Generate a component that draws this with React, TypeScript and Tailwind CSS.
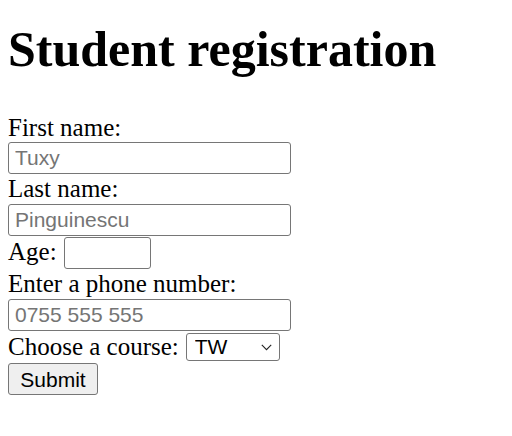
import React from 'react';

const fieldClass =
  "h-[32px] rounded-[3px] border border-[#767676] bg-white px-[6px] font-['Liberation_Sans',Arial,sans-serif] text-[21px] text-black placeholder:text-[#757575] outline-none";

export default function App() {
  return (
    <div className="min-h-[436px] w-[512px] bg-white px-[8px] font-['Liberation_Serif','Times_New_Roman',serif] text-[25px] text-black">
      <h1 className="pt-[21px] text-[50px] font-bold leading-[57px]">Student registration</h1>

      <form className="mt-[35.5px] flex flex-col items-start" onSubmit={(e) => e.preventDefault()}>
        <label htmlFor="first" className="leading-[28.7px]">First name:</label>
        <div className="flex h-[33px]">
          <input id="first" type="text" placeholder="Tuxy" className={`${fieldClass} w-[283px]`} />
        </div>

        <label htmlFor="last" className="leading-[28.7px]">Last name:</label>
        <div className="flex h-[33px]">
          <input id="last" type="text" placeholder="Pinguinescu" className={`${fieldClass} w-[283px]`} />
        </div>

        <div className="flex h-[33px] items-baseline gap-[7px]">
          <label htmlFor="age" className="leading-[28.7px]">Age:</label>
          <input id="age" type="number" className={`${fieldClass} w-[87px]`} />
        </div>

        <label htmlFor="phone" className="leading-[28.7px]">Enter a phone number:</label>
        <div className="flex h-[33px]">
          <input id="phone" type="tel" placeholder="0755 555 555" className={`${fieldClass} w-[283px]`} />
        </div>

        <div className="flex h-[31.5px] items-center gap-[7px]">
          <label htmlFor="course" className="leading-[28.7px]">Choose a course:</label>
          <div className="relative flex">
            <select
              id="course"
              className="h-[28px] w-[94px] appearance-none rounded-[3px] border border-[#767676] bg-white pl-[8px] font-['Liberation_Sans',Arial,sans-serif] text-[21px] leading-[26px] text-black outline-none"
            >
              <option>TW</option>
              <option>PA</option>
              <option>BD</option>
            </select>
            <svg
              className="pointer-events-none absolute right-[8px] top-[11px]"
              width="11"
              height="7"
              viewBox="0 0 11 7"
              fill="none"
            >
              <path d="M0.8 0.8 L5.5 5.6 L10.2 0.8" stroke="#222" strokeWidth="1.1" />
            </svg>
          </div>
        </div>

        <button
          type="submit"
          className="h-[32px] w-[90px] rounded-[3px] border border-[#767676] bg-[#efefef] font-['Liberation_Sans',Arial,sans-serif] text-[21px] text-black"
        >
          Submit
        </button>
      </form>
    </div>
  );
}
